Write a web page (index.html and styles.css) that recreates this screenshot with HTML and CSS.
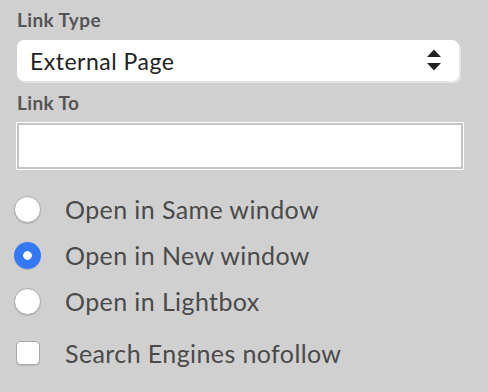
FILE: index.html
```html
<!doctype html>
<html lang="en">
  <head>
    <meta charset="UTF-8" />
    <title>Link settings</title>
    <link rel="stylesheet" href="styles.css">
  </head>
  <body>
    <form class="link-panel">
      <label class="field-label" for="linkType">Link Type</label>
      <div class="select-wrap">
        <select id="linkType" class="select">
          <option>External Page</option>
        </select>
        <svg class="select-arrows" width="16" height="22" viewBox="0 0 16 22" aria-hidden="true">
          <path d="M1 8 L8 0.5 L15 8 Z" fill="#222" />
          <path d="M1 14 L15 14 L8 21.5 Z" fill="#222" />
        </svg>
      </div>

      <label class="field-label field-label--second" for="linkTo">Link To</label>
      <input id="linkTo" class="text-input" type="text" />

      <div class="options">
        <label class="option">
          <input class="radio" type="radio" name="target" />
          <span>Open in Same window</span>
        </label>
        <label class="option">
          <input class="radio" type="radio" name="target" checked />
          <span>Open in New window</span>
        </label>
        <label class="option">
          <input class="radio" type="radio" name="target" />
          <span>Open in Lightbox</span>
        </label>
        <label class="option option--check">
          <input class="checkbox" type="checkbox" />
          <span>Search Engines nofollow</span>
        </label>
      </div>
    </form>
  </body>
</html>
```

FILE: styles.css
```css
* {
  box-sizing: border-box;
}

body {
  margin: 0;
  background: #d0d0d0;
  font-family: Lato, "Open Sans", sans-serif;
  color: #4a4a4a;
}

.link-panel {
  display: flex;
  flex-direction: column;
  padding: 10px 24px 0 14px;
}

.field-label {
  display: block;
  margin: 0 0 10px 3px;
  font-size: 19px;
  line-height: 20px;
  letter-spacing: 0.4px;
  font-weight: 700;
  color: #555;
}

.field-label--second {
  margin-top: 12px;
}

.select-wrap {
  position: relative;
  margin-left: 3px;
  width: 442px;
}

.select {
  appearance: none;
  -webkit-appearance: none;
  display: block;
  width: 100%;
  height: 41px;
  margin: 0;
  padding: 0 40px 0 13px;
  border: none;
  border-radius: 7px;
  background: #fff;
  box-shadow: 2px 2px 0 #e4e4e4;
  font-family: inherit;
  font-size: 23px;
  letter-spacing: 0.5px;
  color: #222;
}

.select-arrows {
  position: absolute;
  right: 17px;
  top: 9px;
  pointer-events: none;
}

.text-input {
  display: block;
  width: 446px;
  height: 46px;
  margin: 0 0 0 3px;
  border: 2px solid #c4c4c4;
  background: #fff;
  box-shadow: 0 0 0 1px #fff;
  font-family: inherit;
  font-size: 18px;
}

.options {
  display: flex;
  flex-direction: column;
  margin-top: 17px;
}

.option {
  display: flex;
  align-items: center;
  gap: 24px;
  height: 46px;
  font-size: 25px;
  letter-spacing: 0.4px;
  color: #4a4a4a;
}

.option--check {
  margin-top: 6px;
  gap: 25px;
  padding-left: 2px;
}

.radio {
  appearance: none;
  -webkit-appearance: none;
  flex: none;
  width: 27px;
  height: 27px;
  margin: 0;
  border-radius: 50%;
  background: #fff;
  border: 1px solid #a8a8a8;
  box-shadow: 0 1px 1px rgba(0, 0, 0, 0.12);
}

.radio:checked {
  border: none;
  background: radial-gradient(circle, #fff 0 4px, #3478f6 4.6px);
}

.checkbox {
  appearance: none;
  -webkit-appearance: none;
  flex: none;
  width: 24px;
  height: 24px;
  margin: 0;
  border-radius: 5px;
  background: #fff;
  border: 1px solid #a8a8a8;
  box-shadow: 0 1px 1px rgba(0, 0, 0, 0.12);
}
```
